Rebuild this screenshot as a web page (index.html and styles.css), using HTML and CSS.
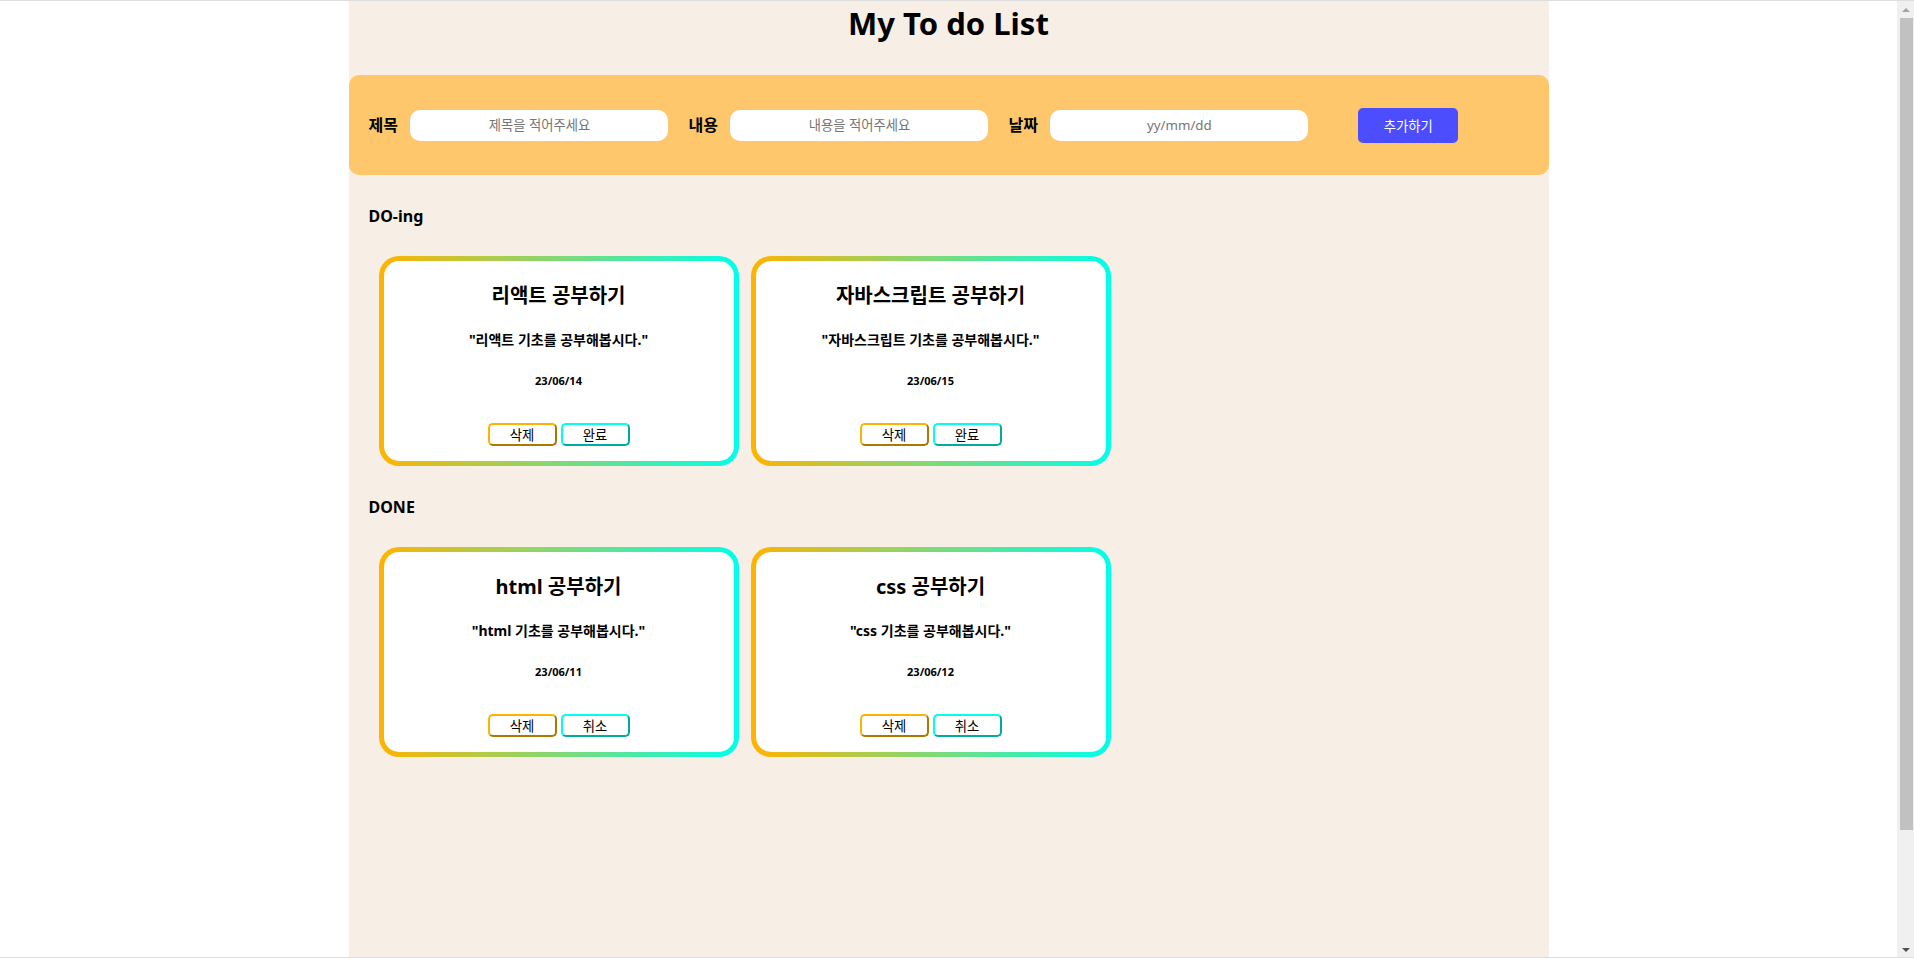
FILE: index.html
```html
<!DOCTYPE html>
<html lang="ko">
<head>
<meta charset="utf-8">
<title>My To do List</title>
<link rel="stylesheet" href="styles.css">
</head>
<body>
<div class="app">
  <h1 class="title">My To do List</h1>
  <form class="add-form">
    <label class="field-label" for="f-title">제목</label>
    <input class="field" id="f-title" type="text" placeholder="제목을 적어주세요">
    <label class="field-label" for="f-body">내용</label>
    <input class="field" id="f-body" type="text" placeholder="내용을 적어주세요">
    <label class="field-label" for="f-date">날짜</label>
    <input class="field" id="f-date" type="text" placeholder="yy/mm/dd">
    <button class="add-btn" type="button">추가하기</button>
  </form>

  <section class="group">
    <h3 class="group-title">DO-ing</h3>
    <div class="cards">
      <div class="card">
        <h2 class="card-title">리액트 공부하기</h2>
        <p class="card-desc">"리액트 기초를 공부해봅시다."</p>
        <p class="card-date">23/06/14</p>
        <div class="card-actions">
          <button class="btn btn-delete" type="button">삭제</button>
          <button class="btn btn-toggle" type="button">완료</button>
        </div>
      </div>
      <div class="card">
        <h2 class="card-title">자바스크립트 공부하기</h2>
        <p class="card-desc">"자바스크립트 기초를 공부해봅시다."</p>
        <p class="card-date">23/06/15</p>
        <div class="card-actions">
          <button class="btn btn-delete" type="button">삭제</button>
          <button class="btn btn-toggle" type="button">완료</button>
        </div>
      </div>
    </div>
  </section>

  <section class="group">
    <h3 class="group-title">DONE</h3>
    <div class="cards">
      <div class="card">
        <h2 class="card-title">html 공부하기</h2>
        <p class="card-desc">"html 기초를 공부해봅시다."</p>
        <p class="card-date">23/06/11</p>
        <div class="card-actions">
          <button class="btn btn-delete" type="button">삭제</button>
          <button class="btn btn-toggle" type="button">취소</button>
        </div>
      </div>
      <div class="card">
        <h2 class="card-title">css 공부하기</h2>
        <p class="card-desc">"css 기초를 공부해봅시다."</p>
        <p class="card-date">23/06/12</p>
        <div class="card-actions">
          <button class="btn btn-delete" type="button">삭제</button>
          <button class="btn btn-toggle" type="button">취소</button>
        </div>
      </div>
    </div>
  </section>
</div>

<div class="scrollbar" aria-hidden="true">
  <span class="sb-arrow sb-up"></span>
  <span class="sb-thumb"></span>
  <span class="sb-arrow sb-down"></span>
</div>
<div class="frame-bottom" aria-hidden="true"></div>
</body>
</html>
```

FILE: styles.css
```css
* {
  box-sizing: border-box;
}

html {
  border-top: 1px solid #dedede;
}

body {
  margin: 0;
  padding-right: 17px;
  background: #ffffff;
  color: #000000;
  font-family: "Noto Sans", "Noto Sans CJK KR", sans-serif;
}

.app {
  width: 1200px;
  min-height: 1089px;
  margin: 0 auto;
  background: #f7eee5;
}

.title {
  margin: 0 0 30px;
  font-size: 31px;
  line-height: 44px;
  font-weight: 700;
  text-align: center;
}

.add-form {
  display: flex;
  align-items: center;
  height: 100px;
  padding: 0 20px;
  background: #ffc76c;
  border-radius: 10px;
}

.field-label {
  margin-right: 12.5px;
  font-size: 16px;
  font-weight: 700;
  line-height: 22px;
}

.field {
  width: 258px;
  height: 31px;
  margin-right: 20px;
  padding: 0 10px;
  border: 0;
  border-radius: 10px;
  background: #ffffff;
  text-align: center;
  font-family: "Noto Sans", "Noto Sans CJK KR", sans-serif;
  font-size: 13.33px;
  color: #000000;
}

.field::placeholder {
  color: #757575;
}

.add-btn {
  width: 100px;
  height: 35px;
  margin-left: 30px;
  padding: 0;
  border: 0;
  border-radius: 5px;
  background: #4b4dff;
  color: #ffffff;
  font-family: "Noto Sans", "Noto Sans CJK KR", sans-serif;
  font-size: 13.33px;
}

.group-title {
  margin: 30px 0 29px 20px;
  font-size: 16px;
  line-height: 22px;
  font-weight: 700;
}

.cards {
  display: flex;
  gap: 12px;
  padding-left: 30px;
}

.card {
  display: flex;
  flex-direction: column;
  align-items: center;
  width: 360px;
  height: 210px;
  padding-top: 23px;
  border: 5px solid transparent;
  border-radius: 20px;
  background:
    linear-gradient(#ffffff, #ffffff) padding-box,
    linear-gradient(90deg, #ffb300, #00ffea) border-box;
}

.card-title {
  margin: 0;
  font-size: 20px;
  line-height: 24px;
  font-weight: 700;
}

.card-desc {
  margin: 22px 0 0;
  font-size: 14px;
  line-height: 20px;
  font-weight: 700;
}

.card-date {
  margin: 23px 0 0;
  font-size: 11px;
  line-height: 16px;
  font-weight: 700;
}

.card-actions {
  display: flex;
  gap: 4px;
  margin-top: 34px;
}

.btn {
  width: 69px;
  height: 23px;
  padding: 0;
  border-radius: 5px;
  background: #ffffff;
  color: #000000;
  font-family: "Noto Sans", "Noto Sans CJK KR", sans-serif;
  font-size: 13.33px;
  line-height: 18px;
}

.btn-delete {
  border: 2px outset #ffb300;
}

.btn-toggle {
  border: 2px outset #00ffee;
}

/* window scrollbar drawn over the page edge */
.scrollbar {
  position: fixed;
  top: 1px;
  right: 0;
  bottom: 0;
  width: 17px;
  display: flex;
  flex-direction: column;
  align-items: center;
  background: #f0f0f0;
}

.sb-arrow {
  display: flex;
  align-items: center;
  justify-content: center;
  width: 17px;
  height: 17px;
}

.sb-arrow::before {
  content: "";
  border-left: 4px solid transparent;
  border-right: 4px solid transparent;
}

.sb-up::before {
  border-bottom: 4px solid #a3a3a3;
}

.sb-down {
  margin-top: auto;
}

.sb-down::before {
  border-top: 4px solid #505050;
}

.sb-thumb {
  width: 13px;
  height: 812px;
  margin-left: 2px;
  background: #c1c1c1;
}

.frame-bottom {
  position: fixed;
  left: 0;
  right: 0;
  bottom: 0;
  height: 1px;
  background: #dedede;
}
```
